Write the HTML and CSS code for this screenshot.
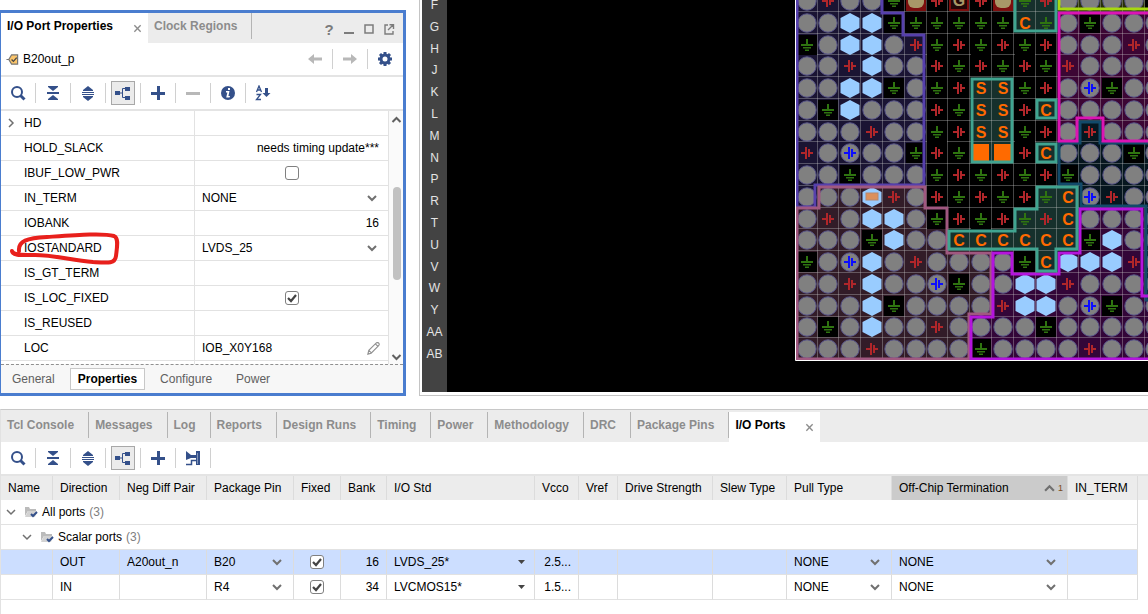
FILE: index.html
```html
<!DOCTYPE html>
<html lang="en">
<head>
    <meta charset="UTF-8">
    <meta name="viewport" content="width=device-width, initial-scale=1.0">
    <title>I/O Planning</title>
    <link rel="stylesheet" href="styles.css">
</head>
<body>
    <!-- Icon sprite -->
    <svg class="sprite" aria-hidden="true">
        <symbol id="i-search" viewBox="0 0 16 16"><circle cx="7" cy="7" r="5" fill="none" stroke="currentColor" stroke-width="2"/><path d="M10.5 10.5l4 4" stroke="currentColor" stroke-width="3"/></symbol>
        <symbol id="i-collapse" viewBox="0 0 16 16"><path d="M3 1h10v1L8 6 3 2zM2 7h12v2H2zM3 15h10v-1l-5-4-5 4z" fill="currentColor"/></symbol>
        <symbol id="i-expand" viewBox="0 0 16 16"><path d="M8 1l5 4v1H3V5zM2 7h12v1H2zM2 9h12v1H2zM3 11h10v1l-5 4-5-4z" fill="currentColor"/></symbol>
        <symbol id="i-tree" viewBox="0 0 16 16"><path d="M0 6h5v4H0zM10 2h5v4h-5zM10 11h5v4h-5z" fill="currentColor"/><path d="M5 8h2M10 3.500H7.500v9H10" fill="none" stroke="currentColor"/></symbol>
        <symbol id="i-plus" viewBox="0 0 16 16"><path d="M1 7h6V1h3v6h5v3h-5v5H7v-5H1z" fill="currentColor"/></symbol>
        <symbol id="i-minus" viewBox="0 0 16 16"><path d="M1 7h14v3H1z" fill="currentColor"/></symbol>
        <symbol id="i-info" viewBox="0 0 16 16"><circle cx="8" cy="8" r="7" fill="currentColor"/><path d="M8 3h2v2H8zM6 6h3.500L8.400 11H10l-.5 1.500H6.200L7.400 7.500H6z" fill="#fff"/></symbol>
        <symbol id="i-sort" viewBox="0 0 16 16"><path d="M1.500 7L4 1l2.500 6M2.500 5h3M1.500 9.500h4l-4 5h4.500" fill="none" stroke="currentColor" stroke-width="1.300"/><path d="M10 3h3v5h2.500l-4 4-4-4H10z" fill="currentColor"/></symbol>
        <symbol id="i-place" viewBox="0 0 16 16"><path d="M1 1l5 4h5V1h4v14h-4V8H6L1 10z" fill="currentColor"/><path d="M1 14.500h5.500v-4H11M13 2v12" fill="none" stroke="currentColor" stroke-width="1.500"/><path d="M12.500 3v11" stroke="#8194b8"/></symbol>
        <symbol id="i-left" viewBox="0 0 16 16"><path d="M1 8l6-5v3.500h8v3H7V13z" fill="currentColor"/></symbol>
        <symbol id="i-right" viewBox="0 0 16 16"><path d="M15 8L9 3v3.500H1v3h8V13z" fill="currentColor"/></symbol>
        <symbol id="i-gear" viewBox="0 0 16 16"><circle cx="8" cy="8" r="4" fill="none" stroke="currentColor" stroke-width="3"/><path d="M8 1v3M8 12v3M1 8h3M12 8h3M3 3l2 2M11 11l2 2M13 3l-2 2M5 11l-2 2" stroke="currentColor" stroke-width="3"/></symbol>
        <symbol id="i-close" viewBox="0 0 10 10"><path d="M1.500 1.500l7 7M8.500 1.500l-7 7" stroke="currentColor" stroke-width="1.500"/></symbol>
        <symbol id="i-min" viewBox="0 0 12 12"><path d="M1 9h10v2H1z" fill="currentColor"/></symbol>
        <symbol id="i-max" viewBox="0 0 12 12"><path d="M2 2h8v8H2z" fill="none" stroke="currentColor" stroke-width="1.500"/></symbol>
        <symbol id="i-float" viewBox="0 0 12 12"><path d="M5 2H2v9h8V8M5 7l5-5M6.500 1.700H10.500V6" fill="none" stroke="currentColor" stroke-width="1.400"/></symbol>
        <symbol id="i-port" viewBox="0 0 14 14"><path d="M.5 7H3l3-5h6.500v10H6L3 7" fill="#fbc56b" stroke="#777" stroke-width="1.300"/><path d="M6 7l2 2 3.500-4" fill="none" stroke="#444" stroke-width="1.400"/></symbol>
        <symbol id="i-chev-right" viewBox="0 0 10 10"><path d="M3 1l4 4-4 4" fill="none" stroke="currentColor" stroke-width="1.500"/></symbol>
        <symbol id="i-chev-down" viewBox="0 0 10 10"><path d="M1 3l4 4 4-4" fill="none" stroke="currentColor" stroke-width="1.500"/></symbol>
        <symbol id="i-chev-up" viewBox="0 0 10 10"><path d="M1 7l4-4 4 4" fill="none" stroke="currentColor" stroke-width="2"/></symbol>
        <symbol id="i-pencil" viewBox="0 0 16 16"><path d="M2 14l1-4 8-8q2-1 3 1 .5 1-.5 2l-8 8zM10 3l3 3M3 10l3 3" fill="none" stroke="currentColor" stroke-width="1.200"/></symbol>
        <symbol id="i-folder" viewBox="0 0 14 12"><path d="M1 10V1h4l1 2h6v2H4z" fill="#bbb"/><path d="M4 5h9l-2 6H1z" fill="#d2d2d2"/><path d="M7 8l2 2 4-4" fill="none" stroke="#34508a" stroke-width="2"/></symbol>
    </svg>

    <div class="workspace">
        <section class="panel properties">
            <div class="tab-bar">
                <button class="tab active">I/O Port Properties <svg class="close"><use href="#i-close"/></svg></button>
                <button class="tab">Clock Regions</button>
                <div class="window-buttons">
                    <button class="help" aria-label="Help">?</button>
                    <button aria-label="Minimize"><svg><use href="#i-min"/></svg></button>
                    <button aria-label="Maximize"><svg><use href="#i-max"/></svg></button>
                    <button aria-label="Float"><svg><use href="#i-float"/></svg></button>
                </div>
            </div>
            <div class="object-bar">
                <svg class="port-icon"><use href="#i-port"/></svg>
                <span class="object-name">B20out_p</span>
                <div class="toolbar">
                    <button class="muted" aria-label="Back"><svg><use href="#i-left"/></svg></button>
                    <button class="muted" aria-label="Forward"><svg><use href="#i-right"/></svg></button>
                    <button aria-label="Settings"><svg><use href="#i-gear"/></svg></button>
                </div>
            </div>
            <div class="toolbar main-tools">
                <button aria-label="Search"><svg><use href="#i-search"/></svg></button>
                <button aria-label="Collapse All"><svg><use href="#i-collapse"/></svg></button>
                <button aria-label="Expand All"><svg><use href="#i-expand"/></svg></button>
                <button class="pressed" aria-label="Group"><svg><use href="#i-tree"/></svg></button>
                <button aria-label="Add"><svg><use href="#i-plus"/></svg></button>
                <button class="muted" aria-label="Remove"><svg><use href="#i-minus"/></svg></button>
                <button aria-label="Info"><svg><use href="#i-info"/></svg></button>
                <button aria-label="Sort"><svg><use href="#i-sort"/></svg></button>
            </div>
            <div class="property-area">
                <table class="property-table">
                    <colgroup><col class="col-key"><col></colgroup>
                    <tbody>
                        <tr><th scope="row"><svg class="twisty"><use href="#i-chev-right"/></svg>HD</th><td></td></tr>
                        <tr><th scope="row">HOLD_SLACK</th><td class="num">needs timing update***</td></tr>
                        <tr><th scope="row"><label for="ibuf">IBUF_LOW_PWR</label></th><td class="check"><input type="checkbox" id="ibuf"></td></tr>
                        <tr><th scope="row"><label for="in-term">IN_TERM</label></th><td><select id="in-term"><option>NONE</option></select></td></tr>
                        <tr><th scope="row">IOBANK</th><td class="num">16</td></tr>
                        <tr>
                            <th scope="row" class="marked">
                                <label for="iostandard">IOSTANDARD</label>
                                <svg class="pen-mark" viewBox="0 0 112 36"><path d="M10 20C9 10 18 7 38 6C68 4 94 2 105 5C110 7 108 16 107 25C106 33 99 32 84 31C62 29 44 24 26 24C13 24 4 25 3 20" fill="none" stroke="#e8201c" stroke-width="4" stroke-linecap="round"/></svg>
                            </th>
                            <td><select id="iostandard"><option>LVDS_25</option></select></td>
                        </tr>
                        <tr><th scope="row">IS_GT_TERM</th><td></td></tr>
                        <tr><th scope="row"><label for="loc-fixed">IS_LOC_FIXED</label></th><td class="check"><input type="checkbox" id="loc-fixed" checked></td></tr>
                        <tr><th scope="row">IS_REUSED</th><td></td></tr>
                        <tr><th scope="row">LOC</th><td><div class="editable">IOB_X0Y168 <svg><use href="#i-pencil"/></svg></div></td></tr>
                        <tr><th></th><td></td></tr>
                    </tbody>
                </table>
                <div class="scrollbar">
                    <svg><use href="#i-chev-up"/></svg>
                    <div class="thumb"></div>
                    <svg class="down"><use href="#i-chev-up"/></svg>
                </div>
            </div>
            <div class="view-tabs">
                <button>General</button>
                <button class="active">Properties</button>
                <button>Configure</button>
                <button>Power</button>
            </div>
        </section>

        <section class="package">
            <div class="row-labels" id="row-labels"></div>
            <div class="package-view">
                <svg id="package-map" viewBox="795 0 353 361" preserveAspectRatio="xMinYMin slice"></svg>
            </div>
        </section>
    </div>

    <section class="ports">
        <div class="tab-bar">
            <button class="tab">Tcl Console</button>
            <button class="tab">Messages</button>
            <button class="tab">Log</button>
            <button class="tab">Reports</button>
            <button class="tab">Design Runs</button>
            <button class="tab">Timing</button>
            <button class="tab">Power</button>
            <button class="tab">Methodology</button>
            <button class="tab">DRC</button>
            <button class="tab">Package Pins</button>
            <button class="tab active">I/O Ports <svg class="close"><use href="#i-close"/></svg></button>
        </div>
        <div class="toolbar main-tools">
            <button aria-label="Search"><svg><use href="#i-search"/></svg></button>
            <button aria-label="Collapse All"><svg><use href="#i-collapse"/></svg></button>
            <button aria-label="Expand All"><svg><use href="#i-expand"/></svg></button>
            <button class="pressed" aria-label="Group"><svg><use href="#i-tree"/></svg></button>
            <button aria-label="Add"><svg><use href="#i-plus"/></svg></button>
            <button class="last" aria-label="Place Ports"><svg><use href="#i-place"/></svg></button>
        </div>
        <table class="port-table">
            <colgroup>
                <col class="w-name"><col class="w-dir"><col class="w-pair"><col class="w-pair"><col class="w-fixed"><col class="w-bank"><col class="w-std">
                <col class="w-vcco"><col class="w-vref"><col class="w-drive"><col class="w-slew"><col class="w-pull"><col class="w-term"><col class="w-in"><col>
            </colgroup>
            <thead>
                <tr>
                    <th>Name</th><th>Direction</th><th>Neg Diff Pair</th><th>Package Pin</th><th>Fixed</th><th>Bank</th><th>I/O Std</th>
                    <th>Vcco</th><th>Vref</th><th>Drive Strength</th><th>Slew Type</th><th>Pull Type</th>
                    <th class="sorted"><div>Off-Chip Termination <span class="sort"><svg><use href="#i-chev-up"/></svg>1</span></div></th>
                    <th>IN_TERM</th><th></th>
                </tr>
            </thead>
            <tbody>
                <tr class="group"><td colspan="14"><div><svg class="twisty"><use href="#i-chev-down"/></svg><svg class="folder"><use href="#i-folder"/></svg>All ports <span>(3)</span></div></td><td></td></tr>
                <tr class="group nested"><td colspan="14"><div><svg class="twisty"><use href="#i-chev-down"/></svg><svg class="folder"><use href="#i-folder"/></svg>Scalar ports <span>(3)</span></div></td><td></td></tr>
                <tr class="selected">
                    <td></td><td>OUT</td><td>A20out_n</td>
                    <td><select aria-label="Package Pin"><option>B20</option></select></td>
                    <td class="check"><input type="checkbox" aria-label="Fixed" checked></td>
                    <td class="num">16</td>
                    <td><select class="small-arrow" aria-label="I/O Std"><option>LVDS_25*</option></select></td>
                    <td class="num">2.5...</td><td></td><td></td><td></td>
                    <td><select aria-label="Pull Type"><option>NONE</option></select></td>
                    <td><select aria-label="Off-Chip Termination"><option>NONE</option></select></td>
                    <td></td><td></td>
                </tr>
                <tr>
                    <td></td><td>IN</td><td></td>
                    <td><select aria-label="Package Pin"><option>R4</option></select></td>
                    <td class="check"><input type="checkbox" aria-label="Fixed" checked></td>
                    <td class="num">34</td>
                    <td><select class="small-arrow" aria-label="I/O Std"><option>LVCMOS15*</option></select></td>
                    <td class="num">1.5...</td><td></td><td></td><td></td>
                    <td><select aria-label="Pull Type"><option>NONE</option></select></td>
                    <td><select aria-label="Off-Chip Termination"><option>NONE</option></select></td>
                    <td></td><td></td>
                </tr>
            </tbody>
        </table>
    </section>

    <script src="script.js"></script>
</body>
</html>
```
FILE: styles.css
```css
* {
    box-sizing: border-box;
}

body {
    margin: 0;
    min-height: 100vh;
    display: flex;
    flex-direction: column;
    gap: 13px;
    background-color: #fff;
    color: #000;
    font-family: "Liberation Sans", Arial, sans-serif;
    font-size: 12px;
    overflow: hidden;
}

button,
select {
    font: inherit;
    color: inherit;
    border: none;
    background: none;
    padding: 0;
    margin: 0;
}

.sprite {
    display: none;
}

.workspace {
    display: flex;
    gap: 13px;
}

/* Tabs */
.tab-bar {
    display: flex;
    align-items: flex-start;
    height: 30px;
    background-color: #ececec;
}

.tab {
    height: 26px;
    padding: 0 14px 0 6px;
    border-right: 1px solid #b4b4b4;
    color: #8c8c8c;
    font-weight: bold;
    white-space: nowrap;
}

.tab.active {
    display: flex;
    align-items: center;
    gap: 20px;
    height: 30px;
    padding: 0 6px 4px;
    border-right: none;
    background-color: #fff;
    color: #000;
}

.close {
    width: 9px;
    height: 9px;
    margin-top: 5px;
    color: #8c8c8c;
}

.window-buttons {
    display: flex;
    align-items: center;
    gap: 8px;
    height: 32px;
    margin-left: auto;
    padding-right: 8px;
    color: #7c7c7c;
}

.window-buttons svg {
    display: block;
    width: 12px;
    height: 12px;
}

.window-buttons .help {
    width: 12px;
    font-size: 15px;
    font-weight: bold;
}

/* Toolbars */
.toolbar {
    display: flex;
    align-items: center;
    color: #34508a;
}

.toolbar button {
    display: flex;
    justify-content: center;
    align-items: center;
    width: 35px;
    height: 20px;
    border-right: 1px solid #d0d0d0;
}

.toolbar button:last-child {
    border-right-color: transparent;
}

.toolbar button.last {
    border-right-color: #d0d0d0;
}

.toolbar svg {
    width: 16px;
    height: 16px;
}

.toolbar .muted {
    color: #b8b8b8;
}

.toolbar .pressed svg {
    width: 24px;
    height: 24px;
    padding: 3px;
    border: 1px solid #a8a8a8;
    background-color: #ebebeb;
}

.main-tools {
    height: 34px;
    border-bottom: 2px solid #e4e4e4;
}

/* Properties panel */
.properties {
    flex: none;
    width: 406px;
    margin-top: 10px;
    border: 3px solid #4a7dcf;
    border-left-width: 1px;
}

.object-bar {
    display: flex;
    align-items: center;
    height: 34px;
    padding-left: 5px;
    border-bottom: 2px solid #e4e4e4;
}

.port-icon {
    width: 13px;
    height: 13px;
    margin-right: 4px;
}

.object-bar .toolbar {
    margin-left: auto;
}

.property-area {
    display: flex;
    height: 253px;
    overflow: hidden;
}

table {
    border-collapse: separate;
    border-spacing: 0;
    table-layout: fixed;
}

.property-table {
    flex: 1;
    width: 0;
}

.property-table .col-key {
    width: 194px;
}

.property-table th,
.property-table td {
    height: 25px;
    padding: 0 9px 0 7px;
    border-right: 1px solid #e2e2e2;
    border-bottom: 1px solid #e2e2e2;
    font-weight: normal;
    text-align: left;
    white-space: nowrap;
}

.property-table th {
    padding: 0 0 0 23px;
}

.property-table th .twisty {
    margin-left: -18px;
    margin-right: 8px;
}

.twisty {
    width: 10px;
    height: 10px;
    color: #707070;
    vertical-align: -1px;
}

td.num.num {
    text-align: right;
}

td.check.check {
    padding: 0;
    text-align: center;
}

.marked {
    position: relative;
}

/* Red pen circle drawn over the row */
.pen-mark {
    position: absolute;
    left: 8px;
    top: -5px;
    width: 112px;
    height: 36px;
    pointer-events: none;
}

input[type="checkbox"] {
    appearance: none;
    display: block;
    width: 14px;
    height: 14px;
    margin: 0 auto;
    border: 1px solid #808080;
    border-radius: 3px;
    background-color: #fff;
}

input[type="checkbox"]:checked {
    background-image: url("data:image/svg+xml,%3Csvg xmlns='http://www.w3.org/2000/svg' viewBox='0 0 12 12'%3E%3Cpath d='M2 6l3 3 5-6' fill='none' stroke='%23444' stroke-width='2.2'/%3E%3C/svg%3E");
}

select {
    appearance: none;
    display: block;
    width: 100%;
    background: url("data:image/svg+xml,%3Csvg xmlns='http://www.w3.org/2000/svg' viewBox='0 0 10 10'%3E%3Cpath d='M1 3l4 4 4-4' fill='none' stroke='%23707070' stroke-width='2'/%3E%3C/svg%3E") no-repeat right 2px center / 10px 10px;
}

.port-table select {
    background-position: right 4px center;
}

.port-table select.small-arrow {
    background: url("data:image/svg+xml,%3Csvg xmlns='http://www.w3.org/2000/svg' viewBox='0 0 10 10'%3E%3Cpath d='M2 3h7L5.500 7z' fill='%23444'/%3E%3C/svg%3E") no-repeat right 1px center / 10px 10px;
}

.editable {
    display: flex;
    justify-content: space-between;
    align-items: center;
}

.editable svg {
    width: 15px;
    height: 15px;
    margin-right: -2px;
    color: #909090;
}

.scrollbar {
    display: flex;
    flex-direction: column;
    align-items: center;
    width: 14px;
    padding: 4px 0 2px 1px;
    background-color: #fafafa;
}

.scrollbar svg {
    flex: none;
    width: 11px;
    height: 10px;
    color: #606060;
}

.scrollbar .down {
    margin-top: auto;
    transform: rotate(180deg);
}

.thumb {
    width: 8px;
    height: 93px;
    margin-top: 62px;
    border-radius: 4px;
    background-color: #c1c1c1;
}

.view-tabs {
    display: flex;
    align-items: center;
    gap: 6px;
    height: 29px;
    padding-left: 2px;
    border-top: 1px dashed #909090;
    background-color: #f7f7f7;
    color: #606060;
}

.view-tabs button {
    height: 22px;
    padding: 0 8px;
    border: 1px solid transparent;
}

.view-tabs .active {
    padding: 0 7px;
    border-color: #c8c8c8;
    background-color: #fff;
    color: #000;
    font-weight: bold;
}

/* Package view */
.package {
    flex: 1;
    display: flex;
    height: 396px;
    padding: 0 0 3px 2px;
    border: 1px solid #c4c4c4;
    border-top: none;
    border-right: none;
    overflow: hidden;
}

.row-labels {
    display: flex;
    flex-direction: column;
    width: 25px;
    background-color: #434343;
    color: #e4e4e4;
    text-align: center;
}

.row-labels ol {
    flex: none;
    display: flex;
    flex-direction: column;
    justify-content: space-around;
    height: 371px;
    margin: -6px 0 0;
    padding: 0;
    list-style: none;
}

.package-view {
    flex: 1;
    display: flex;
    align-items: flex-start;
    padding-left: 348px;
    background-color: #000;
    overflow: hidden;
}

#package-map {
    flex: none;
    width: 353px;
    height: 361px;
}

.grid-line {
    stroke: #c8c8c8;
    stroke-opacity: 0.35;
    fill: none;
}

.outline {
    fill: none;
    stroke-width: 3;
}

.ball {
    fill: #808080;
    stroke: #57548a;
}

.clock-ball {
    fill: #9cf;
}

.ground {
    fill: #2f7410;
}

.supply {
    fill: #b0262a;
}

.supply.ref {
    fill: #0c0cff;
}

.pin-letter {
    fill: #ff6a00;
    font-size: 16px;
    font-weight: bold;
    text-anchor: middle;
}

.pin-letter.dark {
    fill: #a89868;
}

/* I/O ports panel */
.ports {
    flex: 1;
    border-top: 1px solid #c8c8c8;
    border-left: 1px solid #e2e2e2;
}

.ports .tab-bar {
    height: 32px;
    padding-top: 2px;
}

.port-table {
    width: 100%;
}

.w-name { width: 52px; }
.w-dir { width: 67px; }
.w-pair { width: 87px; }
.w-fixed { width: 47px; }
.w-bank { width: 46px; }
.w-std { width: 148px; }
.w-vcco { width: 44px; }
.w-vref { width: 39px; }
.w-drive { width: 95px; }
.w-slew { width: 74px; }
.w-pull { width: 105px; }
.w-term { width: 176px; }
.w-in { width: 70px; }

.port-table th,
.port-table td {
    height: 25px;
    padding: 0 7px;
    border-right: 1px solid #dcdcdc;
    border-bottom: 1px solid #e2e2e2;
    font-weight: normal;
    text-align: left;
    white-space: nowrap;
}

.port-table th {
    height: 24px;
    border-bottom: none;
    background-color: #ececec;
}

.port-table th:last-child,
.port-table td:last-child {
    padding: 0;
    border-right: none;
    border-bottom: none;
}

.port-table th.sorted {
    padding-right: 4px;
    background-color: #cbcbcb;
}

.sorted div,
.group div {
    display: flex;
    align-items: center;
}

.sort {
    display: flex;
    gap: 3px;
    margin-left: auto;
    color: #7a4a20;
    font-size: 9px;
}

.sort svg {
    width: 11px;
    height: 11px;
    color: #707070;
}

.group div {
    gap: 4px;
}

.group td {
    padding-left: 5px;
}

.group.nested td {
    padding-left: 21px;
}

.group span {
    color: #808080;
}

.folder {
    width: 14px;
    height: 12px;
    margin-left: 4px;
}

.selected td:not(:last-child) {
    background-color: #ccdeff;
}
```
FILE: script.js
```js
const ROWS = ['F', 'G', 'H', 'J', 'K', 'L', 'M', 'N', 'P', 'R', 'T', 'U', 'V', 'W', 'Y', 'AA', 'AB'];

// o ball, h clock ball, g ground, e ground on tinted cell, v supply, b reference supply,
// t tan ball, R gigabit pin, i selected pin, O filled pin, C and S config pins
const PINS = [
    'ovoogtvRvtevoooog',
    'oohhggggggCeogooo',
    'gohhovgvgvgvooovo',
    'oovhoovgvgvgvoooo',
    'oohhgogvSSgvobgoo',
    'oghooovgSSvCooooo',
    'ooovoogvSSgvovooo',
    'voboogvgOOvCooogo',
    'oogooogvgvgvgoooo',
    'oooivovgvgveCbvoo',
    'ovohhogvgvevCoooo',
    'oooghooCCCCCCghoo',
    'gobhovoooogChhhvo',
    'oovhoobgoohhvoooo',
    'ooohgoooovhhobgoo',
    'ogohoovoooogooooo',
    'ooovoooogoooovooo'
];

const REGIONS = [
    ['#1a1433', '#5640ac', 'M797 -5H882V13H903V35H924V185H815V207H797Z'],
    ['#06161f', '#124a6a', 'M1059 143H1080V122H1100V143H1155V300H1146V206H1081V184H1059Z'],
    ['#321c28', '#a05880', 'M797 208H819V187H925V208H947V253H991V314H969V359H797Z'],
    ['#330638', '#b414dc', 'M971 317H993V253H1012V274H1059V253H1080V209H1142V296H1155V359H971Z'],
    ['#3c0634', '#dc14b4', 'M1059 13H1155V141H1103V118H1077V141H1059Z'],
    ['#283008', '#a8d810', 'M1059 -5H1155V9H1059Z'],
    ['#16302c', '#40a490', 'M1015 -5H1056V31H1015Z'],
    ['#16302c', '#40a490', 'M972 79H1012V162H972Z'],
    ['#16302c', '#40a490', 'M1037 100H1056V118H1037Z'],
    ['#16302c', '#40a490', 'M1037 144H1056V162H1037Z'],
    ['#16302c', '#40a490', 'M1037 187H1077V249H1056V271H1037V249H949V231H1015V209H1037Z']
];

const PITCH = 21.8;
const LEFT = 806.6;
const TOP = 1;
const GROUND = 'M-1 -6h2v5h5v2h-12v-2h5zM-4 2h8v1.500h-8zM-2 4.500h4v1.500h-4z';
const SUPPLY = 'M-6 -1h4v-5h2v12h-2v-5h-4zM1 -4h2v3h3v2h-3v3h-2z';

function path(cls, d) {
    return `<path class="${cls}" d="${d}"/>`;
}

function drawPin(type) {
    const cell = (fill) => `<rect x="-10" y="-10" width="20" height="20" fill="${fill}"/>`;
    const ball = '<circle class="ball" r="9.200"/>';
    const hex = path('clock-ball', 'M0 -10l9.500 5v10l-9.500 5l-9.500 -5v-10z');
    switch (type) {
        case 'o': return ball;
        case 'h': return hex;
        case 'g': return cell('#000') + path('ground', GROUND);
        case 'e': return path('ground', GROUND);
        case 'v': return path('supply', SUPPLY);
        case 'b': return ball + path('supply ref', SUPPLY);
        case 'i': return hex + '<rect x="-6" y="-4" width="12" height="7" fill="#dc905c" stroke="#b88870"/>';
        case 'O': return '<rect x="-9" y="-9" width="17" height="17" fill="#ff6a00"/>';
        case 't': return cell('#7c0e0e') + '<rect x="-8" y="-16" width="16" height="23" rx="6" fill="#a89868"/>';
        case 'R': return cell('#7c0e0e') + '<rect x="-8" y="-8" width="16" height="16" fill="#220808"/><text class="pin-letter dark" y="5">G</text>';
        default: return `<text class="pin-letter" y="6">${type}</text>`;
    }
}

function drawPackage() {
    const bottom = TOP + 16.5 * (PITCH - 0.04);
    let out = REGIONS.map(([fill, , d]) => `<path fill="${fill}" d="${d}"/>`).join('');
    for (let i = 0; i <= 17; i++) {
        const x = Math.round(LEFT + (i - 0.5) * PITCH) - 0.5;
        const y = Math.round(TOP + (i - 0.5) * (PITCH - 0.04)) - 0.5;
        out += path('grid-line', `M${x} 0V${bottom}M796 ${y}H1160`);
    }
    // Pins sit on whole pixels so the thin symbols stay crisp
    PINS.forEach((row, r) => {
        [...row].forEach((type, c) => {
            const x = Math.round(LEFT + c * PITCH);
            const y = Math.round(TOP + r * (PITCH - 0.04));
            out += `<g transform="translate(${x} ${y})">${drawPin(type)}</g>`;
        });
    });
    out += REGIONS.map(([, stroke, d]) => `<path class="outline" stroke="${stroke}" d="${d}"/>`).join('');
    out += '<path d="M795.500 0V360.500H1160" fill="none" stroke="#fff"/>';
    document.getElementById('package-map').innerHTML = out;
}

document.getElementById('row-labels').innerHTML =
    '<ol>' + ROWS.map((name) => `<li>${name}</li>`).join('') + '</ol>';
drawPackage();
```
